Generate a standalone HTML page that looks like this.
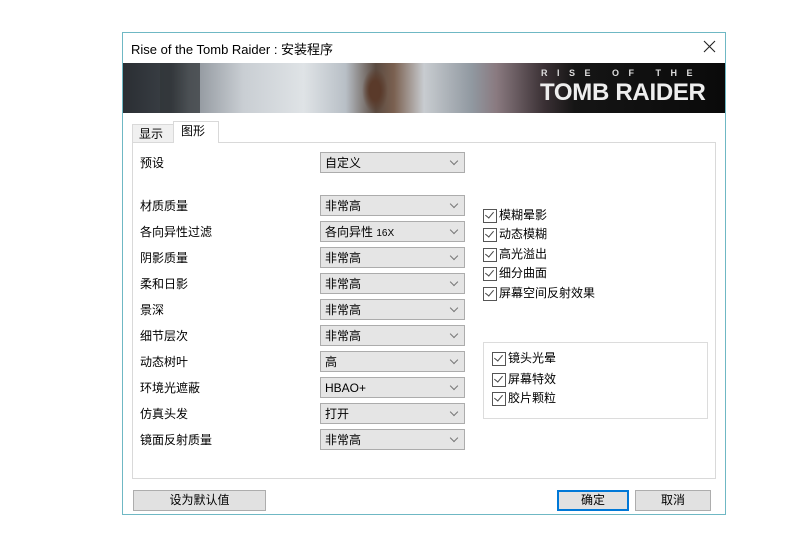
<!DOCTYPE html>
<html><head><meta charset="utf-8"><style>
*{box-sizing:border-box;margin:0;padding:0}
body{width:800px;height:533px;background:#fff;position:relative;font-family:"Liberation Sans","Noto Sans CJK SC",sans-serif;font-size:12px;color:#000;overflow:hidden}
.a{position:absolute}
.win{left:122px;top:32px;width:604px;height:483px;border:1px solid #6fb8c4;background:#fff}
.dd{position:absolute;left:320px;width:145px;height:21px;background:#e5e5e5;border:1px solid #acacac;padding-left:4px;line-height:20px;font-size:12px}
.dd:after{content:"";position:absolute;right:7px;top:5px;width:5px;height:5px;border-right:1px solid #777;border-bottom:1px solid #777;transform:rotate(45deg)}
.lb{position:absolute;left:140px;font-size:12px;line-height:16px}
.cb{position:absolute;font-size:12px;line-height:16px;padding-left:16px}
.cb:before{content:"";position:absolute;left:0;top:2px;width:12px;height:12px;border:1px solid #555;background:#fff}
.cb:after{content:"";position:absolute;left:4px;top:3px;width:4px;height:7px;border-right:1.3px solid #444;border-bottom:1.3px solid #444;transform:rotate(40deg)}
.btn{position:absolute;top:490px;height:21px;background:#e1e1e1;border:1px solid #adadad;text-align:center;line-height:19px}
</style></head><body>
<div class="a win"></div>
<div class="a" style="left:131px;top:39px;font-size:13px">Rise of the Tomb Raider : 安装程序</div>
<svg class="a" style="left:703px;top:40px" width="13" height="13"><path d="M1 1L12 12M12 1L1 12" stroke="#222" stroke-width="1.1"/></svg>
<div class="a" style="left:123px;top:63px;width:602px;height:50px;background:linear-gradient(90deg,#2a2e33 0%,#3b4046 8%,#8a9097 11%,#c9ced3 20%,#dfe3e6 30%,#b8bfc6 37%,#5a4a40 42%,#7a6050 45%,#c8ccd0 50%,#9098a0 58%,#8a7a80 62%,#3a3034 70%,#151515 75%,#0a0a0a 100%)"></div>
<div class="a" style="left:160px;top:63px;width:40px;height:50px;background:#303438;opacity:.7"></div>
<div class="a" style="left:362px;top:68px;width:26px;height:45px;background:radial-gradient(ellipse at center,#5a3a2a 30%,rgba(90,60,40,0) 70%)"></div>
<div class="a" style="left:541px;top:68px;color:#ddd;font-size:9px;font-weight:bold;letter-spacing:9.5px;white-space:nowrap">RISE OF THE</div>
<div class="a" style="left:540px;top:79px;color:#eee;font-size:24px;font-weight:bold;letter-spacing:-0.3px;white-space:nowrap">TOMB RAIDER</div>
<div class="a" style="left:132px;top:124px;width:42px;height:19px;border:1px solid #d9d9d9;border-bottom:none;background:#f0f0f0;padding-left:6px;line-height:19px">显示</div>
<div class="a" style="left:132px;top:142px;width:584px;height:337px;border:1px solid #d9d9d9;background:#fff"></div>
<div class="a" style="left:173px;top:121px;width:46px;height:22px;border:1px solid #d9d9d9;border-bottom:none;background:#fff;padding-left:7px;line-height:18px">图形</div>
<div class="lb" style="top:155px">预设</div><div class="dd" style="top:152px">自定义</div>
<div class="lb" style="top:198px">材质质量</div><div class="dd" style="top:195px">非常高</div>
<div class="lb" style="top:224px">各向异性过滤</div><div class="dd" style="top:221px">各向异性 <span style="font-size:10px">16X</span></div>
<div class="lb" style="top:250px">阴影质量</div><div class="dd" style="top:247px">非常高</div>
<div class="lb" style="top:276px">柔和日影</div><div class="dd" style="top:273px">非常高</div>
<div class="lb" style="top:302px">景深</div><div class="dd" style="top:299px">非常高</div>
<div class="lb" style="top:328px">细节层次</div><div class="dd" style="top:325px">非常高</div>
<div class="lb" style="top:354px">动态树叶</div><div class="dd" style="top:351px">高</div>
<div class="lb" style="top:380px">环境光遮蔽</div><div class="dd" style="top:377px">HBAO+</div>
<div class="lb" style="top:406px">仿真头发</div><div class="dd" style="top:403px">打开</div>
<div class="lb" style="top:432px">镜面反射质量</div><div class="dd" style="top:429px">非常高</div>
<div class="cb" style="left:483px;top:207px">模糊晕影</div>
<div class="cb" style="left:483px;top:226px">动态模糊</div>
<div class="cb" style="left:483px;top:246px">高光溢出</div>
<div class="cb" style="left:483px;top:265px">细分曲面</div>
<div class="cb" style="left:483px;top:285px">屏幕空间反射效果</div>
<div class="a" style="left:483px;top:342px;width:225px;height:77px;border:1px solid #dcdcdc"></div>
<div class="cb" style="left:492px;top:350px">镜头光晕</div>
<div class="cb" style="left:492px;top:371px">屏幕特效</div>
<div class="cb" style="left:492px;top:390px">胶片颗粒</div>
<div class="btn" style="left:133px;width:133px">设为默认值</div>
<div class="btn" style="left:557px;width:72px;border:2px solid #0078d7;line-height:17px">确定</div>
<div class="btn" style="left:635px;width:76px">取消</div>
</body></html>
